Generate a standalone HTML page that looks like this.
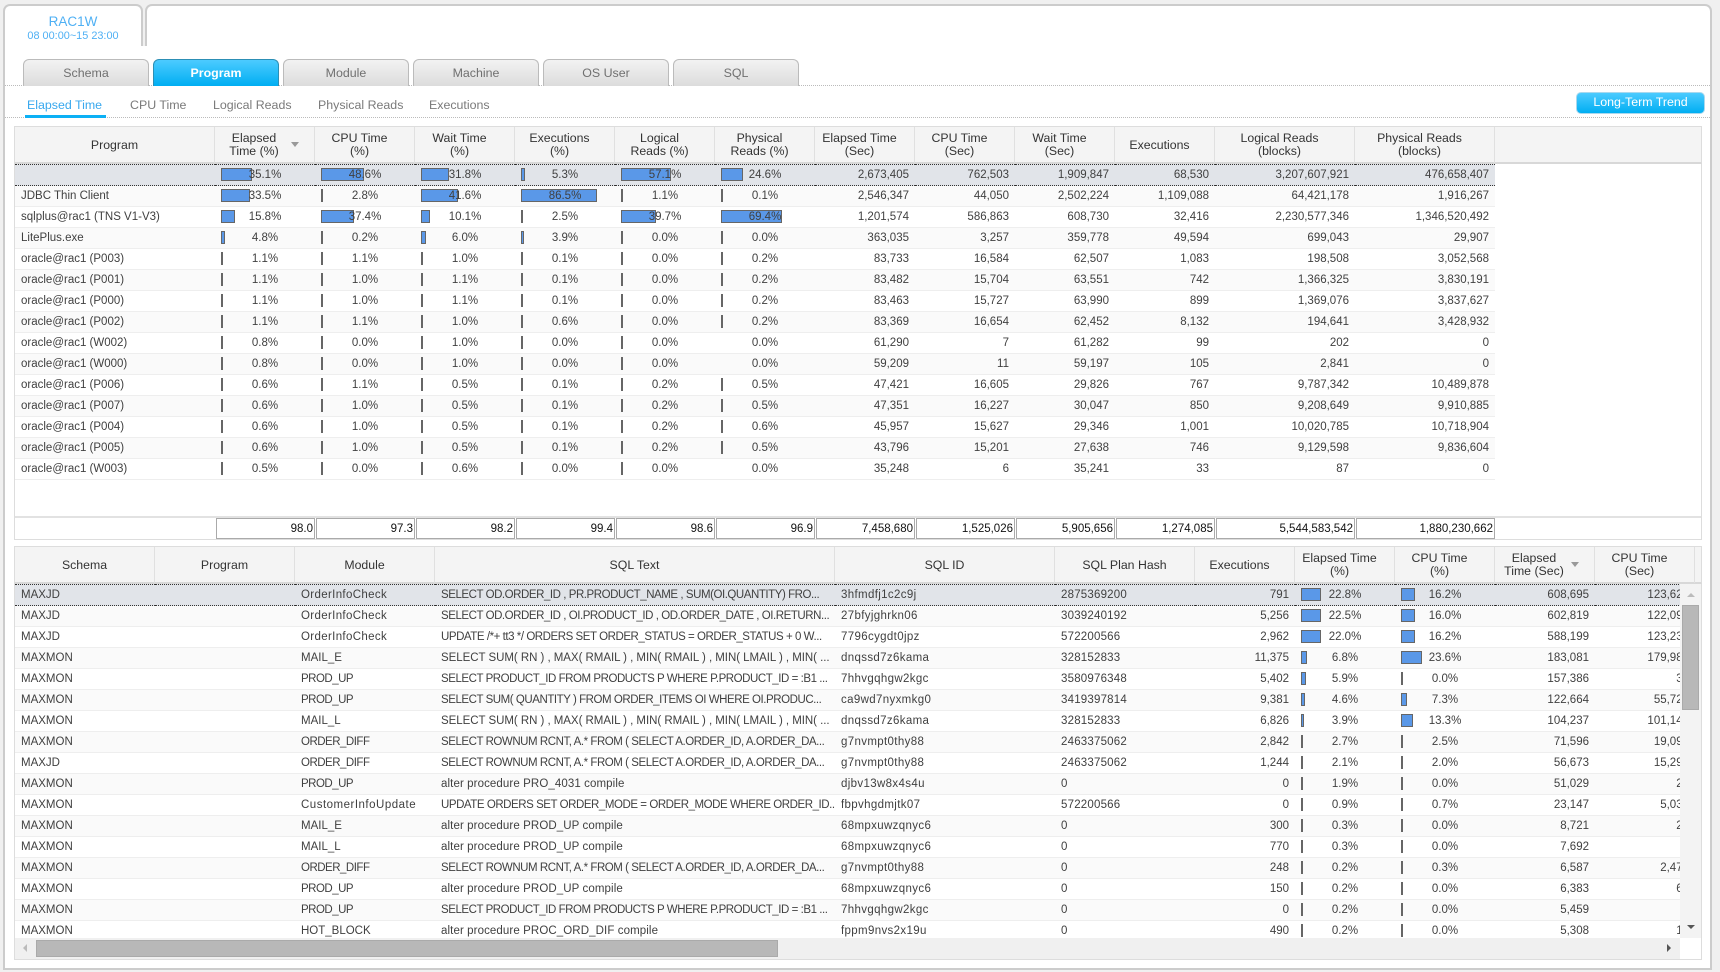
<!DOCTYPE html>
<html><head><meta charset="utf-8"><title>RAC1W</title>
<style>
html,body{margin:0;padding:0;width:1720px;height:972px;overflow:hidden;background:#f0f0f0;font-family:"Liberation Sans",sans-serif}
div{box-sizing:border-box}
.a{position:absolute}
.tab{position:absolute;top:4px;height:42px;background:#fff;border:2px solid #ccc;border-bottom:0;border-radius:7px 7px 0 0}
.btn{position:absolute;top:59px;width:126px;height:27px;border:1px solid #bbb;border-bottom:0;border-radius:6px 6px 0 0;background:linear-gradient(#f2f2f2,#dcdcdc);color:#707070;font-size:12.4px;line-height:26px;text-align:center}
.on{background:linear-gradient(#4ccbff,#00aef2);border-color:#2c8fb5;color:#fff;font-weight:bold}
.sub{position:absolute;top:97px;font-size:12.4px;line-height:16px;color:#7a7a7a;white-space:nowrap}
.dot{position:absolute;left:5px;width:1705px;height:1px;border-top:1px dotted #bbb}
.hd{position:absolute;left:14px;width:1688px;height:38px;background:#f4f4f4;border:1px solid #ddd;border-bottom:2px solid #d8d8d8}
table{border-collapse:separate;border-spacing:0;table-layout:fixed;font-size:11.5px;color:#404040}
th{box-sizing:border-box;height:36px;padding:0 10px 0 0;font-weight:normal;font-size:12.3px;line-height:13px;color:#333;text-align:center;border-right:1px solid #e0e0e0}
th.c{padding:0}
th.s{padding-right:21px}
td{box-sizing:border-box;height:21px;line-height:14px;padding:0 6px 1px;border-bottom:1px solid #eee;white-space:nowrap;overflow:hidden;position:relative;z-index:0}
tr:nth-child(even) td{background:#fafafa}
tr.sel td{height:22px;background:#e1e4e9;border-top:1px dotted #333;border-bottom:1px dotted #333}
td.n{text-align:right}
td.p{text-align:center}
td i{position:absolute;left:6px;top:3px;height:13px;box-sizing:border-box;background:#5a98e8;border:1px solid #666;z-index:-1}
td i.t{width:2px;background:#666;border:0}
.bt td:nth-child(4){letter-spacing:-.45px}
.bt td:nth-child(5){letter-spacing:.35px}
.bt td:nth-child(6){letter-spacing:.2px}
.bt td.k{letter-spacing:-.04px}
.bt td.l{letter-spacing:.1px}
.bt td.m1{letter-spacing:.35px}
.bt td.m2{letter-spacing:.5px}
.bt td.m3{letter-spacing:-.5px}
.tot{position:absolute;top:518px;height:21px;background:#fff;border:1px solid #aaa;font-size:11.5px;line-height:20px;color:#111;text-align:right;padding-right:1px}
.tri{position:absolute;width:0;height:0}
</style></head><body>
<div class="tab" style="left:3px;width:140px"></div>
<div class="tab" style="left:145px;width:1567px"></div>
<div class="a" style="left:3px;top:46px;width:1709px;height:924px;background:#fff;border:2px solid #ccc;border-top:0"></div>
<div class="a" style="left:3px;top:14px;width:140px;text-align:center;font-size:13.5px;line-height:15px;color:#4fb0f4">RAC1W</div>
<div class="a" style="left:3px;top:29px;width:140px;text-align:center;font-size:10.9px;line-height:14px;color:#4fb0f4">08 00:00~15 23:00</div>

<div class="dot" style="top:85px"></div>
<div class="btn" style="left:23px">Schema</div>
<div class="btn on" style="left:153px">Program</div>
<div class="btn" style="left:283px">Module</div>
<div class="btn" style="left:413px">Machine</div>
<div class="btn" style="left:543px">OS User</div>
<div class="btn" style="left:673px">SQL</div>

<div class="dot" style="top:117px"></div>
<div class="sub" style="left:27px;color:#38a8ee">Elapsed Time</div>
<div class="a" style="left:25px;top:115px;width:81px;height:3px;background:#0cb0f5"></div>
<div class="sub" style="left:130px">CPU Time</div>
<div class="sub" style="left:213px">Logical Reads</div>
<div class="sub" style="left:318px">Physical Reads</div>
<div class="sub" style="left:429px">Executions</div>
<div class="a" style="left:1576px;top:92px;width:129px;height:22px;border:1px solid #a8d8ee;border-radius:5px;background:linear-gradient(#4ccbff,#00aef2);color:#fff;font-size:12.4px;line-height:18px;text-align:center">Long-Term Trend</div>

<!-- top table -->
<div class="a" style="left:14px;top:126px;width:1688px;height:414px;border:1px solid #ddd"></div>
<div class="hd" style="top:126px"><table style="width:1480px"><colgroup><col style="width:200px"><col span="10" style="width:100px"><col span="2" style="width:140px"></colgroup><tr>
<th class="c">Program</th><th class="s">Elapsed<br>Time (%)</th><th>CPU Time<br>(%)</th><th>Wait Time<br>(%)</th><th>Executions<br>(%)</th><th>Logical<br>Reads (%)</th><th>Physical<br>Reads (%)</th><th>Elapsed Time<br>(Sec)</th><th>CPU Time<br>(Sec)</th><th>Wait Time<br>(Sec)</th><th>Executions</th><th>Logical Reads<br>(blocks)</th><th>Physical Reads<br>(blocks)</th></tr></table></div>
<div class="tri" style="left:291px;top:142px;border-left:4px solid transparent;border-right:4px solid transparent;border-top:5px solid #999"></div>
<table class="a" style="left:15px;top:164px;width:1480px"><colgroup><col style="width:200px"><col span="10" style="width:100px"><col span="2" style="width:140px"></colgroup>
<tr class="sel"><td></td><td class="p"><i style="width:31px"></i>35.1%</td><td class="p"><i style="width:43px"></i>48.6%</td><td class="p"><i style="width:28px"></i>31.8%</td><td class="p"><i style="width:4px"></i>5.3%</td><td class="p"><i style="width:50px"></i>57.1%</td><td class="p"><i style="width:22px"></i>24.6%</td><td class="n">2,673,405</td><td class="n">762,503</td><td class="n">1,909,847</td><td class="n">68,530</td><td class="n">3,207,607,921</td><td class="n">476,658,407</td></tr>
<tr><td>JDBC Thin Client</td><td class="p"><i style="width:29px"></i>33.5%</td><td class="p"><i class="t"></i>2.8%</td><td class="p"><i style="width:37px"></i>41.6%</td><td class="p"><i style="width:76px"></i>86.5%</td><td class="p"><i class="t"></i>1.1%</td><td class="p"><i class="t"></i>0.1%</td><td class="n">2,546,347</td><td class="n">44,050</td><td class="n">2,502,224</td><td class="n">1,109,088</td><td class="n">64,421,178</td><td class="n">1,916,267</td></tr>
<tr><td>sqlplus@rac1 (TNS V1-V3)</td><td class="p"><i style="width:14px"></i>15.8%</td><td class="p"><i style="width:33px"></i>37.4%</td><td class="p"><i style="width:9px"></i>10.1%</td><td class="p"><i class="t"></i>2.5%</td><td class="p"><i style="width:35px"></i>39.7%</td><td class="p"><i style="width:61px"></i>69.4%</td><td class="n">1,201,574</td><td class="n">586,863</td><td class="n">608,730</td><td class="n">32,416</td><td class="n">2,230,577,346</td><td class="n">1,346,520,492</td></tr>
<tr><td>LitePlus.exe</td><td class="p"><i style="width:4px"></i>4.8%</td><td class="p"><i class="t"></i>0.2%</td><td class="p"><i style="width:5px"></i>6.0%</td><td class="p"><i style="width:3px"></i>3.9%</td><td class="p"><i class="t"></i>0.0%</td><td class="p"><i class="t"></i>0.0%</td><td class="n">363,035</td><td class="n">3,257</td><td class="n">359,778</td><td class="n">49,594</td><td class="n">699,043</td><td class="n">29,907</td></tr>
<tr><td>oracle@rac1 (P003)</td><td class="p"><i class="t"></i>1.1%</td><td class="p"><i class="t"></i>1.1%</td><td class="p"><i class="t"></i>1.0%</td><td class="p"><i class="t"></i>0.1%</td><td class="p"><i class="t"></i>0.0%</td><td class="p"><i class="t"></i>0.2%</td><td class="n">83,733</td><td class="n">16,584</td><td class="n">62,507</td><td class="n">1,083</td><td class="n">198,508</td><td class="n">3,052,568</td></tr>
<tr><td>oracle@rac1 (P001)</td><td class="p"><i class="t"></i>1.1%</td><td class="p"><i class="t"></i>1.0%</td><td class="p"><i class="t"></i>1.1%</td><td class="p"><i class="t"></i>0.1%</td><td class="p"><i class="t"></i>0.0%</td><td class="p"><i class="t"></i>0.2%</td><td class="n">83,482</td><td class="n">15,704</td><td class="n">63,551</td><td class="n">742</td><td class="n">1,366,325</td><td class="n">3,830,191</td></tr>
<tr><td>oracle@rac1 (P000)</td><td class="p"><i class="t"></i>1.1%</td><td class="p"><i class="t"></i>1.0%</td><td class="p"><i class="t"></i>1.1%</td><td class="p"><i class="t"></i>0.1%</td><td class="p"><i class="t"></i>0.0%</td><td class="p"><i class="t"></i>0.2%</td><td class="n">83,463</td><td class="n">15,727</td><td class="n">63,990</td><td class="n">899</td><td class="n">1,369,076</td><td class="n">3,837,627</td></tr>
<tr><td>oracle@rac1 (P002)</td><td class="p"><i class="t"></i>1.1%</td><td class="p"><i class="t"></i>1.1%</td><td class="p"><i class="t"></i>1.0%</td><td class="p"><i class="t"></i>0.6%</td><td class="p"><i class="t"></i>0.0%</td><td class="p"><i class="t"></i>0.2%</td><td class="n">83,369</td><td class="n">16,654</td><td class="n">62,452</td><td class="n">8,132</td><td class="n">194,641</td><td class="n">3,428,932</td></tr>
<tr><td>oracle@rac1 (W002)</td><td class="p"><i class="t"></i>0.8%</td><td class="p"><i class="t"></i>0.0%</td><td class="p"><i class="t"></i>1.0%</td><td class="p"><i class="t"></i>0.0%</td><td class="p"><i class="t"></i>0.0%</td><td class="p">0.0%</td><td class="n">61,290</td><td class="n">7</td><td class="n">61,282</td><td class="n">99</td><td class="n">202</td><td class="n">0</td></tr>
<tr><td>oracle@rac1 (W000)</td><td class="p"><i class="t"></i>0.8%</td><td class="p"><i class="t"></i>0.0%</td><td class="p"><i class="t"></i>1.0%</td><td class="p"><i class="t"></i>0.0%</td><td class="p"><i class="t"></i>0.0%</td><td class="p">0.0%</td><td class="n">59,209</td><td class="n">11</td><td class="n">59,197</td><td class="n">105</td><td class="n">2,841</td><td class="n">0</td></tr>
<tr><td>oracle@rac1 (P006)</td><td class="p"><i class="t"></i>0.6%</td><td class="p"><i class="t"></i>1.1%</td><td class="p"><i class="t"></i>0.5%</td><td class="p"><i class="t"></i>0.1%</td><td class="p"><i class="t"></i>0.2%</td><td class="p"><i class="t"></i>0.5%</td><td class="n">47,421</td><td class="n">16,605</td><td class="n">29,826</td><td class="n">767</td><td class="n">9,787,342</td><td class="n">10,489,878</td></tr>
<tr><td>oracle@rac1 (P007)</td><td class="p"><i class="t"></i>0.6%</td><td class="p"><i class="t"></i>1.0%</td><td class="p"><i class="t"></i>0.5%</td><td class="p"><i class="t"></i>0.1%</td><td class="p"><i class="t"></i>0.2%</td><td class="p"><i class="t"></i>0.5%</td><td class="n">47,351</td><td class="n">16,227</td><td class="n">30,047</td><td class="n">850</td><td class="n">9,208,649</td><td class="n">9,910,885</td></tr>
<tr><td>oracle@rac1 (P004)</td><td class="p"><i class="t"></i>0.6%</td><td class="p"><i class="t"></i>1.0%</td><td class="p"><i class="t"></i>0.5%</td><td class="p"><i class="t"></i>0.1%</td><td class="p"><i class="t"></i>0.2%</td><td class="p"><i class="t"></i>0.6%</td><td class="n">45,957</td><td class="n">15,627</td><td class="n">29,346</td><td class="n">1,001</td><td class="n">10,020,785</td><td class="n">10,718,904</td></tr>
<tr><td>oracle@rac1 (P005)</td><td class="p"><i class="t"></i>0.6%</td><td class="p"><i class="t"></i>1.0%</td><td class="p"><i class="t"></i>0.5%</td><td class="p"><i class="t"></i>0.1%</td><td class="p"><i class="t"></i>0.2%</td><td class="p"><i class="t"></i>0.5%</td><td class="n">43,796</td><td class="n">15,201</td><td class="n">27,638</td><td class="n">746</td><td class="n">9,129,598</td><td class="n">9,836,604</td></tr>
<tr><td>oracle@rac1 (W003)</td><td class="p"><i class="t"></i>0.5%</td><td class="p"><i class="t"></i>0.0%</td><td class="p"><i class="t"></i>0.6%</td><td class="p"><i class="t"></i>0.0%</td><td class="p"><i class="t"></i>0.0%</td><td class="p">0.0%</td><td class="n">35,248</td><td class="n">6</td><td class="n">35,241</td><td class="n">33</td><td class="n">87</td><td class="n">0</td></tr>
</table>
<div class="a" style="left:15px;top:516px;width:1686px;height:2px;background:#e2e2e2"></div>
<div class="tot" style="left:216px;width:99px">98.0</div>
<div class="tot" style="left:316px;width:99px">97.3</div>
<div class="tot" style="left:416px;width:99px">98.2</div>
<div class="tot" style="left:516px;width:99px">99.4</div>
<div class="tot" style="left:616px;width:99px">98.6</div>
<div class="tot" style="left:716px;width:99px">96.9</div>
<div class="tot" style="left:816px;width:99px">7,458,680</div>
<div class="tot" style="left:916px;width:99px">1,525,026</div>
<div class="tot" style="left:1016px;width:99px">5,905,656</div>
<div class="tot" style="left:1116px;width:99px">1,274,085</div>
<div class="tot" style="left:1216px;width:139px">5,544,583,542</div>
<div class="tot" style="left:1356px;width:139px">1,880,230,662</div>

<!-- bottom table -->
<div class="a" style="left:14px;top:546px;width:1688px;height:414px;border:1px solid #ddd"></div>
<div class="hd" style="top:546px"><table style="width:1680px"><colgroup><col span="3" style="width:140px"><col style="width:400px"><col style="width:220px"><col style="width:140px"><col span="5" style="width:100px"></colgroup><tr>
<th class="c">Schema</th><th class="c">Program</th><th class="c">Module</th><th class="c">SQL Text</th><th class="c">SQL ID</th><th class="c">SQL Plan Hash</th><th>Executions</th><th>Elapsed Time<br>(%)</th><th>CPU Time<br>(%)</th><th class="s">Elapsed<br>Time (Sec)</th><th>CPU Time<br>(Sec)</th></tr></table></div>
<div class="tri" style="left:1571px;top:562px;border-left:4px solid transparent;border-right:4px solid transparent;border-top:5px solid #999"></div>
<div class="a" style="left:15px;top:584px;width:1665px;height:354px;overflow:hidden">
<table class="bt" style="width:1680px"><colgroup><col span="3" style="width:140px"><col style="width:400px"><col style="width:220px"><col style="width:140px"><col span="5" style="width:100px"></colgroup>
<tr class="sel"><td>MAXJD</td><td></td><td class="m1">OrderInfoCheck</td><td>SELECT OD.ORDER_ID , PR.PRODUCT_NAME , SUM(OI.QUANTITY) FRO...</td><td>3hfmdfj1c2c9j</td><td>2875369200</td><td class="n">791</td><td class="p"><i style="width:20px"></i>22.8%</td><td class="p"><i style="width:14px"></i>16.2%</td><td class="n">608,695</td><td class="n">123,627</td></tr>
<tr><td>MAXJD</td><td></td><td class="m1">OrderInfoCheck</td><td>SELECT OD.ORDER_ID , OI.PRODUCT_ID , OD.ORDER_DATE , OI.RETURN...</td><td>27bfyjghrkn06</td><td>3039240192</td><td class="n">5,256</td><td class="p"><i style="width:20px"></i>22.5%</td><td class="p"><i style="width:14px"></i>16.0%</td><td class="n">602,819</td><td class="n">122,098</td></tr>
<tr><td>MAXJD</td><td></td><td class="m1">OrderInfoCheck</td><td>UPDATE /*+ tt3 */ ORDERS SET ORDER_STATUS = ORDER_STATUS + 0 W...</td><td>7796cygdt0jpz</td><td>572200566</td><td class="n">2,962</td><td class="p"><i style="width:20px"></i>22.0%</td><td class="p"><i style="width:14px"></i>16.2%</td><td class="n">588,199</td><td class="n">123,231</td></tr>
<tr><td>MAXMON</td><td></td><td>MAIL_E</td><td class="k">SELECT SUM( RN ) , MAX( RMAIL ) , MIN( RMAIL ) , MIN( LMAIL ) , MIN( ...</td><td>dnqssd7z6kama</td><td>328152833</td><td class="n">11,375</td><td class="p"><i style="width:6px"></i>6.8%</td><td class="p"><i style="width:21px"></i>23.6%</td><td class="n">183,081</td><td class="n">179,984</td></tr>
<tr><td>MAXMON</td><td></td><td class="m3">PROD_UP</td><td>SELECT PRODUCT_ID FROM PRODUCTS P WHERE P.PRODUCT_ID = :B1 ...</td><td>7hhvgqhgw2kgc</td><td>3580976348</td><td class="n">5,402</td><td class="p"><i style="width:5px"></i>5.9%</td><td class="p"><i class="t"></i>0.0%</td><td class="n">157,386</td><td class="n">38</td></tr>
<tr><td>MAXMON</td><td></td><td class="m3">PROD_UP</td><td>SELECT SUM( QUANTITY ) FROM ORDER_ITEMS OI WHERE OI.PRODUC...</td><td>ca9wd7nyxmkg0</td><td>3419397814</td><td class="n">9,381</td><td class="p"><i style="width:4px"></i>4.6%</td><td class="p"><i style="width:6px"></i>7.3%</td><td class="n">122,664</td><td class="n">55,726</td></tr>
<tr><td>MAXMON</td><td></td><td>MAIL_L</td><td class="k">SELECT SUM( RN ) , MAX( RMAIL ) , MIN( RMAIL ) , MIN( LMAIL ) , MIN( ...</td><td>dnqssd7z6kama</td><td>328152833</td><td class="n">6,826</td><td class="p"><i style="width:3px"></i>3.9%</td><td class="p"><i style="width:12px"></i>13.3%</td><td class="n">104,237</td><td class="n">101,146</td></tr>
<tr><td>MAXMON</td><td></td><td class="m3">ORDER_DIFF</td><td>SELECT ROWNUM RCNT, A.* FROM ( SELECT A.ORDER_ID, A.ORDER_DA...</td><td>g7nvmpt0thy88</td><td>2463375062</td><td class="n">2,842</td><td class="p"><i class="t"></i>2.7%</td><td class="p"><i class="t"></i>2.5%</td><td class="n">71,596</td><td class="n">19,094</td></tr>
<tr><td>MAXJD</td><td></td><td class="m3">ORDER_DIFF</td><td>SELECT ROWNUM RCNT, A.* FROM ( SELECT A.ORDER_ID, A.ORDER_DA...</td><td>g7nvmpt0thy88</td><td>2463375062</td><td class="n">1,244</td><td class="p"><i class="t"></i>2.1%</td><td class="p"><i class="t"></i>2.0%</td><td class="n">56,673</td><td class="n">15,291</td></tr>
<tr><td>MAXMON</td><td></td><td class="m3">PROD_UP</td><td class="l">alter procedure PRO_4031 compile</td><td>djbv13w8x4s4u</td><td>0</td><td class="n">0</td><td class="p"><i class="t"></i>1.9%</td><td class="p"><i class="t"></i>0.0%</td><td class="n">51,029</td><td class="n">24</td></tr>
<tr><td>MAXMON</td><td></td><td class="m2">CustomerInfoUpdate</td><td>UPDATE ORDERS SET ORDER_MODE = ORDER_MODE WHERE ORDER_ID...</td><td>fbpvhgdmjtk07</td><td>572200566</td><td class="n">0</td><td class="p"><i class="t"></i>0.9%</td><td class="p"><i class="t"></i>0.7%</td><td class="n">23,147</td><td class="n">5,031</td></tr>
<tr><td>MAXMON</td><td></td><td>MAIL_E</td><td class="l">alter procedure PROD_UP compile</td><td>68mpxuwzqnyc6</td><td>0</td><td class="n">300</td><td class="p"><i class="t"></i>0.3%</td><td class="p"><i class="t"></i>0.0%</td><td class="n">8,721</td><td class="n">26</td></tr>
<tr><td>MAXMON</td><td></td><td>MAIL_L</td><td class="l">alter procedure PROD_UP compile</td><td>68mpxuwzqnyc6</td><td>0</td><td class="n">770</td><td class="p"><i class="t"></i>0.3%</td><td class="p"><i class="t"></i>0.0%</td><td class="n">7,692</td><td class="n">6</td></tr>
<tr><td>MAXMON</td><td></td><td class="m3">ORDER_DIFF</td><td>SELECT ROWNUM RCNT, A.* FROM ( SELECT A.ORDER_ID, A.ORDER_DA...</td><td>g7nvmpt0thy88</td><td>0</td><td class="n">248</td><td class="p"><i class="t"></i>0.2%</td><td class="p"><i class="t"></i>0.3%</td><td class="n">6,587</td><td class="n">2,473</td></tr>
<tr><td>MAXMON</td><td></td><td class="m3">PROD_UP</td><td class="l">alter procedure PROD_UP compile</td><td>68mpxuwzqnyc6</td><td>0</td><td class="n">150</td><td class="p"><i class="t"></i>0.2%</td><td class="p"><i class="t"></i>0.0%</td><td class="n">6,383</td><td class="n">61</td></tr>
<tr><td>MAXMON</td><td></td><td class="m3">PROD_UP</td><td>SELECT PRODUCT_ID FROM PRODUCTS P WHERE P.PRODUCT_ID = :B1 ...</td><td>7hhvgqhgw2kgc</td><td>0</td><td class="n">0</td><td class="p"><i class="t"></i>0.2%</td><td class="p"><i class="t"></i>0.0%</td><td class="n">5,459</td><td class="n">7</td></tr>
<tr><td>MAXMON</td><td></td><td>HOT_BLOCK</td><td class="l">alter procedure PROC_ORD_DIF compile</td><td>fppm9nvs2x19u</td><td>0</td><td class="n">490</td><td class="p"><i class="t"></i>0.2%</td><td class="p"><i class="t"></i>0.0%</td><td class="n">5,308</td><td class="n">12</td></tr>
</table></div>
<!-- vertical scrollbar -->
<div class="a" style="left:1680px;top:584px;width:21px;height:354px;background:#f3f3f3"></div>
<div class="a" style="left:1682px;top:605px;width:17px;height:105px;background:#b8b8b8;border:1px solid #aaa"></div>
<div class="tri" style="left:1687px;top:593px;border-left:4px solid transparent;border-right:4px solid transparent;border-bottom:4px solid #bbb"></div>
<div class="tri" style="left:1687px;top:925px;border-left:4px solid transparent;border-right:4px solid transparent;border-top:4px solid #555"></div>
<!-- horizontal scrollbar -->
<div class="a" style="left:15px;top:938px;width:1665px;height:21px;background:#f0f0f0"></div>
<div class="a" style="left:36px;top:940px;width:742px;height:17px;background:#b8b8b8;border:1px solid #aaa"></div>
<div class="tri" style="left:23px;top:944px;border-top:4px solid transparent;border-bottom:4px solid transparent;border-right:4px solid #bbb"></div>
<div class="tri" style="left:1667px;top:944px;border-top:4px solid transparent;border-bottom:4px solid transparent;border-left:4px solid #555"></div>
</body></html>
